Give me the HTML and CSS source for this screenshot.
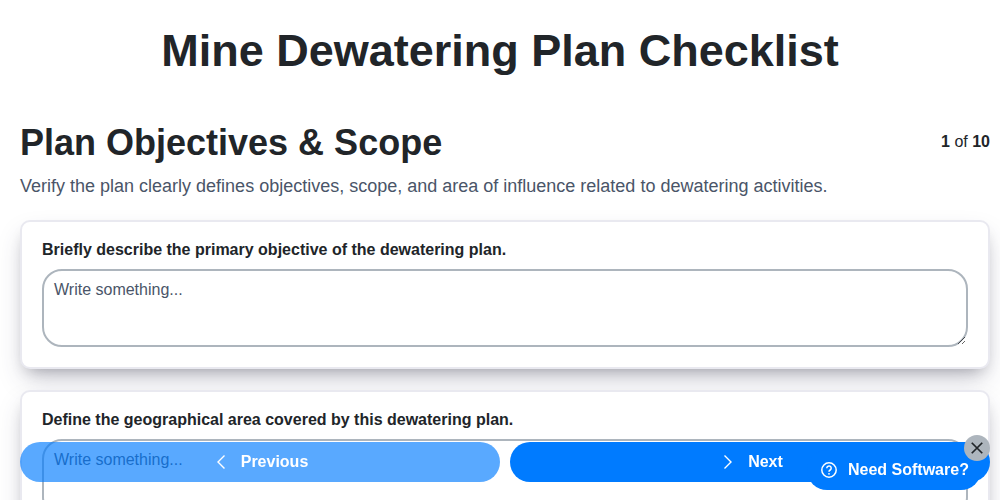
FILE: index.html
```html
<!DOCTYPE html>
<html lang="en">
<head>
<meta charset="utf-8">
<title>Mine Dewatering Plan Checklist</title>
<link rel="stylesheet" href="styles.css">
</head>
<body>
<h1 class="title">Mine Dewatering Plan Checklist</h1>
<main class="page">
  <div class="section-head">
    <h2 class="section-title">Plan Objectives &amp; Scope</h2>
    <div class="counter"><b>1</b> of <b>10</b></div>
  </div>
  <p class="section-desc">Verify the plan clearly defines objectives, scope, and area of influence related to dewatering activities.</p>
  <section class="card">
    <label class="question">Briefly describe the primary objective of the dewatering plan.</label>
    <textarea class="answer" placeholder="Write something..."></textarea>
  </section>
  <section class="card">
    <label class="question">Define the geographical area covered by this dewatering plan.</label>
    <textarea class="answer" placeholder="Write something..."></textarea>
  </section>
</main>
<nav class="nav-bar">
  <button class="nav-btn prev">
    <svg class="chev" viewBox="0 0 16 16"><path d="M12.500 1.500 6 8l6.500 6.500" fill="none" stroke="currentColor" stroke-width="1.400"/></svg>
    <span>Previous</span>
  </button>
  <button class="nav-btn next">
    <svg class="chev" viewBox="0 0 16 16"><path d="M7.500 1.500 14 8l-6.500 6.500" fill="none" stroke="currentColor" stroke-width="1.400"/></svg>
    <span>Next</span>
  </button>
</nav>
<a class="promo">
  <svg class="help" viewBox="0 0 16 16"><circle cx="8" cy="8" r="7.200" fill="none" stroke="currentColor" stroke-width="1.500"/><path d="M5.800 6.200a2.200 2.200 0 1 1 3.400 1.800c-.8.500-1.200.9-1.200 1.700" fill="none" stroke="currentColor" stroke-width="1.500"/><circle cx="8" cy="11.800" r=".9" fill="currentColor"/></svg>
  <span>Need Software?</span>
</a>
<button class="promo-close" aria-label="Close">
  <svg viewBox="0 0 16 16"><path d="M2 2l12 12M14 2L2 14" fill="none" stroke="currentColor" stroke-width="2"/></svg>
</button>
</body>
</html>
```
FILE: styles.css
```css
* { box-sizing: border-box; }
html, body { height: 100%; overflow: hidden; }
body {
  margin: 0;
  background: #fff;
  color: #212529;
  font-family: "Liberation Sans", Arial, sans-serif;
}
.title {
  margin: 0;
  padding-top: 24px;
  font-size: 45px;
  line-height: 54px;
  font-weight: 700;
  text-align: center;
}
.page { padding: 0 10px 0 20px; margin-top: 43px; }
.section-head {
  display: flex;
  justify-content: space-between;
  align-items: flex-start;
}
.section-title {
  margin: 0;
  font-size: 36px;
  line-height: 43px;
  font-weight: 700;
}
.counter { font-size: 16px; line-height: 24px; margin-top: 9px; }
.section-desc {
  margin: 10px 0 0;
  font-size: 18px;
  line-height: 24px;
  color: #4a5568;
}
.card {
  margin-top: 22px;
  padding: 20px;
  height: 149px;
  background: #fff;
  border: 2px solid #e9e9f0;
  border-radius: 10px;
  box-shadow: rgba(50, 50, 93, .25) 0 13px 27px -5px, rgba(0, 0, 0, .3) 0 8px 16px -8px;
}
.card + .card { height: 200px; margin-top: 21px; }
.question {
  display: block;
  font-size: 16px;
  line-height: 16px;
  font-weight: 700;
  margin-bottom: 11px;
}
.answer {
  display: block;
  width: 100%;
  height: 78px;
  padding: 9px 10px 10px;
  border: 2px solid #adb5bd;
  border-radius: 20px;
  background: #fff;
  color: #4a5568;
  font: 16px/1.2 "Liberation Sans", Arial, sans-serif;
  resize: vertical;
  outline: none;
}
.answer::placeholder { color: #4a5568; opacity: 1; }
.nav-bar {
  position: fixed;
  left: 20px;
  right: 10px;
  top: 442px;
  display: flex;
  gap: 10px;
}
.nav-btn {
  flex: 1;
  height: 40px;
  display: flex;
  align-items: center;
  justify-content: center;
  gap: 13px;
  border: 0;
  border-radius: 20px;
  background: #007bff;
  color: #fff;
  font: 700 16px "Liberation Sans", Arial, sans-serif;
}
.nav-btn.next { gap: 15px; }
.nav-btn.prev { background: rgba(0, 123, 255, .65); }
.chev { width: 16px; height: 16px; }
.promo {
  position: fixed;
  left: 807px;
  top: 450px;
  width: 174px;
  height: 40px;
  padding-left: 14px;
  display: flex;
  align-items: center;
  gap: 11px;
  border-radius: 20px;
  background: #007bff;
  color: #fff;
  font-size: 16px;
  font-weight: 700;
}
.help { width: 16px; height: 16px; flex: none; }
.promo-close {
  position: fixed;
  left: 964px;
  top: 435px;
  width: 26px;
  height: 26px;
  padding: 0;
  display: flex;
  align-items: center;
  justify-content: center;
  border: 0;
  border-radius: 50%;
  background: #adb5bd;
  color: #212529;
}
.promo-close svg { width: 14px; height: 14px; }
```
